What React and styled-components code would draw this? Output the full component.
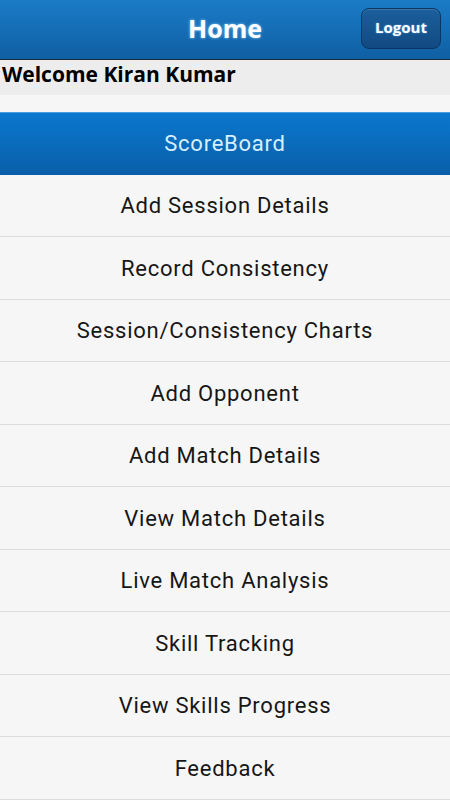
import React from "react";
import styled, { createGlobalStyle } from "styled-components";

const Global = createGlobalStyle`
  html, body { margin: 0; padding: 0; background: #f6f6f6; }
  body { font-family: Roboto, "Noto Sans", "Liberation Sans", sans-serif; }
  * { box-sizing: border-box; }
`;

const Page = styled.div`
  width: 450px;
  min-height: 800px;
  background: #f6f6f6;
  display: flex;
  flex-direction: column;
`;

const Header = styled.header`
  height: 60px;
  padding-bottom: 3px;
  background: linear-gradient(#1b7cc7, #0f5fa3);
  border-bottom: 1px solid #1a2c3d;
  display: flex;
  align-items: center;
  justify-content: center;
  position: relative;
`;

const Title = styled.h1`
  margin: 0;
  color: #fff;
  font-family: "Open Sans", "Noto Sans", sans-serif;
  font-size: 25px;
  font-weight: 700;
  text-shadow: 0 0 3px #8fd0ff;
`;

const LogoutButton = styled.button`
  position: absolute;
  right: 9px;
  top: 8px;
  width: 80px;
  height: 41px;
  padding: 0 0 3px;
  border-radius: 8px;
  border: 1px solid #0b3562;
  background: linear-gradient(#1b5f9c, #124a82);
  box-shadow: inset 0 1px 0 rgba(255,255,255,0.15);
  color: #fff;
  font-family: "Open Sans", "Noto Sans", sans-serif;
  font-weight: 700;
  font-size: 15px;
  text-shadow: 0 0 2px #5aa8e8;
`;

const Welcome = styled.div`
  background: #ededed;
  height: 35px;
  padding: 0 2px;
  font-family: "Open Sans", "Noto Sans", sans-serif;
  font-size: 21px;
  line-height: 28px;
  font-weight: 700;
  color: #000;
`;

const Spacer = styled.div`
  height: 17px;
`;

const Menu = styled.nav`
  display: flex;
  flex-direction: column;
`;

const Item = styled.div`
  height: 62.5px;
  display: flex;
  align-items: center;
  justify-content: center;
  font-size: 22px;
  letter-spacing: 0.75px;
  color: ${p => (p.$active ? "#d6efff" : "#161616")};
  background: ${p => (p.$active ? "linear-gradient(#0a78cf, #0a5ea8)" : "#f6f6f6")};
  border-top: 1px solid ${p => (p.$active ? "#4a9ee0" : "transparent")};
  border-bottom: 1px solid ${p => (p.$active ? "#0a5ea8" : "#dcdcdc")};
`;

const items = [
  "ScoreBoard",
  "Add Session Details",
  "Record Consistency",
  "Session/Consistency Charts",
  "Add Opponent",
  "Add Match Details",
  "View Match Details",
  "Live Match Analysis",
  "Skill Tracking",
  "View Skills Progress",
  "Feedback",
];

export default function App() {
  return (
    <Page>
      <Global />
      <Header>
        <Title>Home</Title>
        <LogoutButton>Logout</LogoutButton>
      </Header>
      <Welcome>Welcome Kiran Kumar</Welcome>
      <Spacer />
      <Menu>
        {items.map((t, i) => (
          <Item key={t} $active={i === 0}>{t}</Item>
        ))}
      </Menu>
    </Page>
  );
}
